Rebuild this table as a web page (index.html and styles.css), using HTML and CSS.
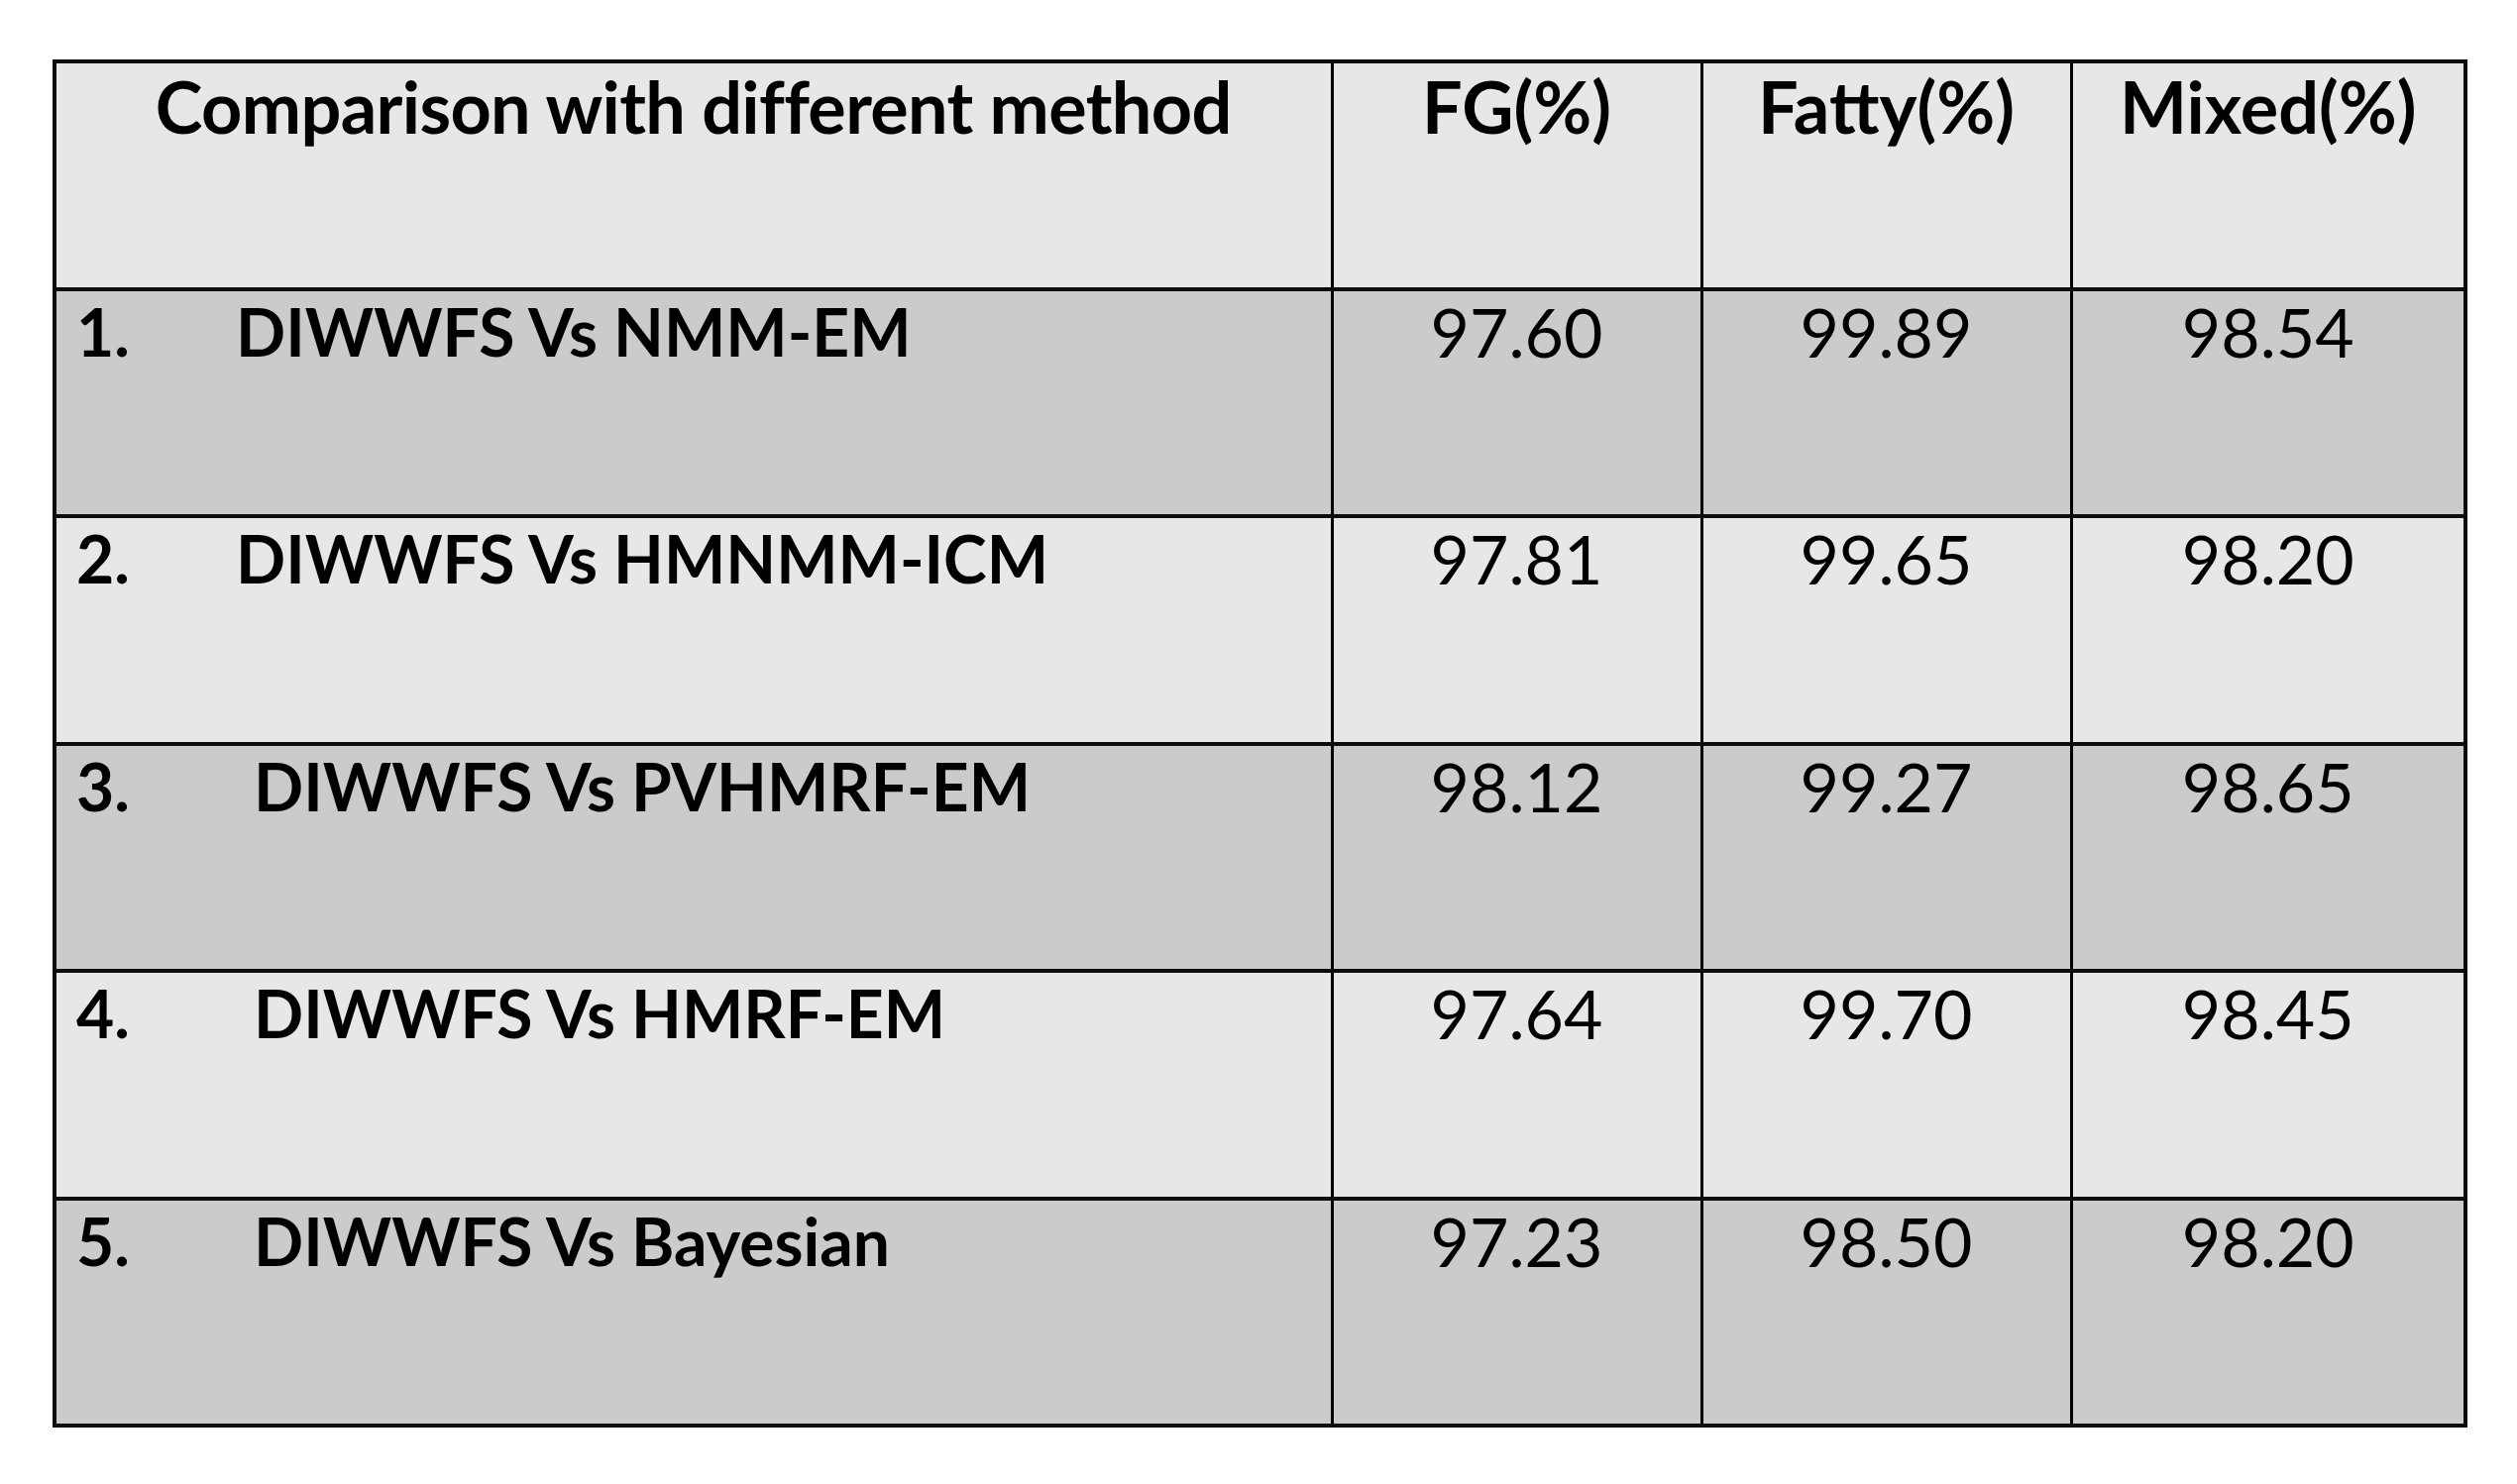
FILE: index.html
```html
<!DOCTYPE html>
<html lang="en">
<head>
  <meta charset="UTF-8" />
  <title>Comparison with different method</title>
  <link rel="stylesheet" href="styles.css">
</head>
<body>

  <!-- comparison table -->
  <table class="compare">
    <colgroup>
      <col class="col-method">
      <col class="col-value">
      <col class="col-value">
      <col class="col-last">
    </colgroup>
    <tr class="head">
      <th class="title">Comparison with different method</th>
      <th>FG(%)</th>
      <th>Fatty(%)</th>
      <th>Mixed(%)</th>
    </tr>
    <tr class="dark">
      <td class="method"><span class="num">1.</span><span class="name">DIWWFS Vs NMM-EM</span></td>
      <td>97.60</td>
      <td>99.89</td>
      <td>98.54</td>
    </tr>
    <tr class="light">
      <td class="method"><span class="num">2.</span><span class="name">DIWWFS Vs HMNMM-ICM</span></td>
      <td>97.81</td>
      <td>99.65</td>
      <td>98.20</td>
    </tr>
    <tr class="dark">
      <td class="method"><span class="num">3.</span><span class="name shifted">DIWWFS Vs PVHMRF-EM</span></td>
      <td>98.12</td>
      <td>99.27</td>
      <td>98.65</td>
    </tr>
    <tr class="light">
      <td class="method"><span class="num">4.</span><span class="name shifted">DIWWFS Vs HMRF-EM</span></td>
      <td>97.64</td>
      <td>99.70</td>
      <td>98.45</td>
    </tr>
    <tr class="dark">
      <td class="method"><span class="num">5.</span><span class="name shifted">DIWWFS Vs Bayesian</span></td>
      <td>97.23</td>
      <td>98.50</td>
      <td>98.20</td>
    </tr>
  </table>

</body>
</html>
```

FILE: styles.css
```css
* {
  margin: 0;
  padding: 0;
  box-sizing: border-box;
}

body {
  background: #ffffff;
  font-family: Lato, "Open Sans", sans-serif;
  color: #000000;
  padding: 60px 0 0 53px;
}

.compare {
  border-collapse: collapse;
  table-layout: fixed;
  border: 4px solid #0d0d0d;
  width: 2437px;
}

.col-method {
  width: 1289px;
}

.col-value {
  width: 373px;
}

.col-last {
  width: 398px;
}

.compare tr {
  height: 229.5px;
}

.compare th,
.compare td {
  border-left: 3px solid #000000;
  border-right: 3px solid #000000;
  border-bottom: 4px solid #0d0d0d;
  vertical-align: top;
  text-align: center;
  line-height: 1.2;
  padding: 0;
}

.compare th {
  font-size: 72px;
  font-weight: 700;
}

.compare th.title {
  letter-spacing: -0.65px;
}

.compare td {
  font-size: 68px;
  font-weight: 400;
}

.compare td.method {
  text-align: left;
  font-size: 66px;
  font-weight: 700;
  padding: 1px 0 0 20px;
}

.head,
.light {
  background: #e7e7e7;
}

.dark {
  background: #cbcbcb;
}

.num {
  display: inline-block;
  width: 161px;
}

.name.shifted {
  margin-left: 18px;
}
```
